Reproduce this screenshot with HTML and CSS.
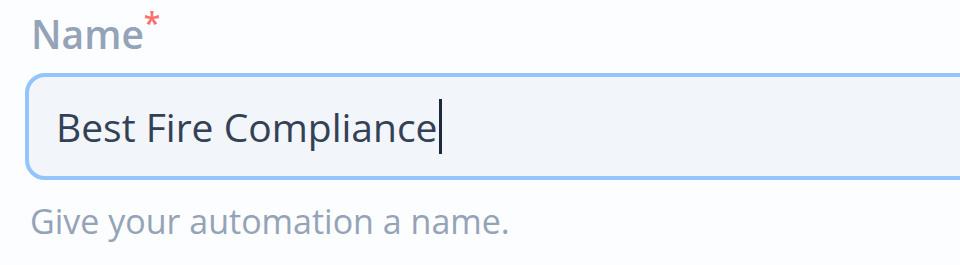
FILE: index.html
```html
<!DOCTYPE html>
<html lang="en">
<head>
<meta charset="utf-8">
<title>Name field</title>
<link rel="stylesheet" href="styles.css">
</head>
<body>
<div class="field">
  <label class="label">Name<span class="req">*</span></label>
  <div class="input"><span class="value">Best Fire Compliance</span><span class="caret"></span></div>
  <p class="help">Give your automation a name.</p>
</div>
</body>
</html>
```
FILE: styles.css
```css
html, body {
  margin: 0;
  padding: 0;
  background: #fcfdfe;
  overflow: hidden;
  width: 960px;
  height: 265px;
}
.field {
  display: flex;
  flex-direction: column;
  padding: 8px 0 0 25px;
  font-family: "Open Sans", "Noto Sans", sans-serif;
}
.label {
  font-size: 39px;
  line-height: 52px;
  font-weight: 600;
  color: #94a3b8;
  padding-left: 6px;
}
.req {
  color: #f87171;
  font-size: 30px;
  vertical-align: top;
  line-height: 30px;
  font-weight: 600;
}
.input {
  margin-top: 13px;
  width: 1100px;
  height: 99px;
  border: 4px solid #93c5fd;
  border-radius: 20px;
  background: #f2f5f9;
  display: flex;
  align-items: center;
  padding-left: 27px;
  box-sizing: content-box;
}
.value {
  font-size: 39px;
  color: #334155;
}
.caret {
  display: inline-block;
  width: 3px;
  height: 55px;
  background: #1e293b;
  margin-left: 1px;
}
.help {
  margin: 21px 0 0 5px;
  font-size: 34px;
  line-height: 40px;
  color: #94a3b8;
}
```
